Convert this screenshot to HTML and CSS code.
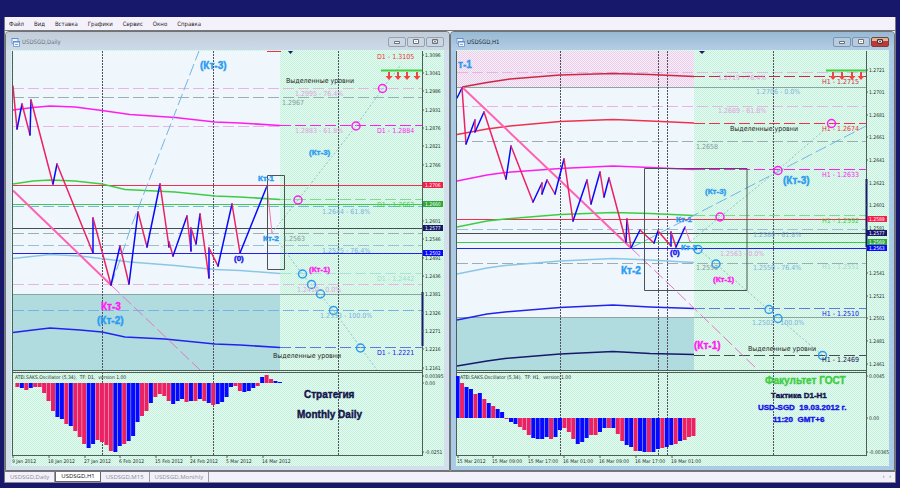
FILE: index.html
```html
<!DOCTYPE html>
<html lang="ru">
<head>
<meta charset="utf-8">
<title>USDSGD</title>
<link rel="stylesheet" href="styles.css">
</head>
<body>
<div class="app">
  <nav class="menubar">
    <button>Файл</button><button>Вид</button><button>Вставка</button><button>Графики</button><button>Сервис</button><button>Окно</button><button>Справка</button>
  </nav>

  <main class="workspace">
    <section class="window">
      <header class="titlebar">
        <svg class="doc-icon" viewBox="0 0 9 9"><path class="doc-back" d="M1 .5h6v5H1z"/><path class="doc-front" d="M2.500 3.500h6v5h-6z"/><path class="doc-bar" d="M2 3h7v1.500H2zM.5 0h7v1h-7z"/><path class="doc-line" d="M4 7l1-1 1 1 1-1"/></svg>
        <h2>USDSGD,Daily</h2>
        <div class="controls">
          <button aria-label="Свернуть"><svg viewBox="0 0 16 8"><path d="M5.500 3.500h5v2h-5z"/></svg></button>
          <button aria-label="Развернуть"><svg viewBox="0 0 16 8"><path d="M5.500 1.500h5v4h-5zM7.500 3.500h1"/></svg></button>
          <button aria-label="Закрыть"><svg viewBox="0 0 16 8"><path d="M5.500 1.500h5v4h-5zM6.500 2.500l3 2M9.500 2.500l-3 2"/></svg></button>
        </div>
      </header>
      <svg class="chart" id="daily" viewBox="11 50 433 416">
        <defs>
          <pattern id="mint" width="2" height="2" patternUnits="userSpaceOnUse"><path class="mint-a" d="M0 0h2v2H0z"/><path class="mint-b" d="M0 0h1v1H0zM1 1h1v1H1z"/></pattern>
          <pattern id="rose" width="2" height="2" patternUnits="userSpaceOnUse"><path class="rose-a" d="M0 0h2v2H0z"/><path class="rose-b" d="M0 0h1v1H0zM1 1h1v1H1z"/></pattern>
          <g id="sell"><path d="M-1 0h2v4h2.500L0 8l-3.500-4H-1z"/></g>
        </defs>
        <rect class="mint" x="11" y="50" width="433" height="416"/>
        <rect class="plot" x="13" y="51" width="267" height="319"/>
        <rect class="teal" x="13" y="294" width="267" height="76"/>
        <g class="dash">
          <path class="c-pink" d="M13 88.500H422M13 126.500H280M13 284.500H422"/>
          <path class="c-gray" d="M13 97.500H422M13 233.500H422"/>
          <path class="c-sky" d="M13 206.500H422M13 310.500H422"/>
          <path class="c-steel" d="M13 245.500H422"/>
          <path class="c-magenta" d="M280 125.500H422"/>
          <path class="c-leaf" d="M280 199.500H422"/>
          <path class="c-pale" d="M280 273.500H422"/>
          <path class="c-indigo" d="M280 347.500H422"/>
        </g>
        <path class="line c-red" d="M13 185.500H422"/>
        <path class="line c-green" d="M13 204.500H422"/>
        <path class="line c-dark" d="M13 228.500H422"/>
        <path class="line c-blue" d="M13 253.500H422"/>
        <path class="line c-slate" d="M13 294.500H422"/>
        <path class="grid" d="M102.500 51V455M213.500 51V455M338.500 51V455"/>
        <g class="average">
          <path class="c-magenta" d="M13 110L33 107.500 50 106 75 107 102 110.500 130 114.500 175 117.500 215 122 240 123 280 125.500"/>
          <path class="c-green" d="M13 184L33 181 50 180 75 181 102 184 125 189.500 175 192 215 196 240 197 280 199.500"/>
          <path class="c-water" d="M13 258.500L50 254.500 80 256 130 262 175 265.500 215 269.500 240 270.500 280 273.500"/>
          <path class="c-blue" d="M13 332.500L33 330 50 328 80 330 102 332 125 337 165 339 215 344 240 345 280 347.500"/>
        </g>
        <path class="ray c-sky" d="M111 285L119 263 131 227 199 51"/>
        <path class="trend" d="M13 190.500L111 285"/>
        <path class="ray c-rose" d="M111 285L200 370"/>
        <path class="dots" d="M272 233L298 200 356 126 383 88 400 66M272 233L302 274 334 311 361 348 377 370"/>
        <g class="zigzag"></g>
        <path class="line c-pinkline" d="M267 186L272 233"/>
        <path class="frame" d="M267.500 175.500h17v94h-17z"/>
        <g class="ring c-magenta"><circle cx="298" cy="200" r="4"/><circle cx="356" cy="126" r="4"/><circle cx="382.500" cy="88.500" r="4"/></g>
        <g class="ring c-azure"><circle cx="302.500" cy="274" r="4"/><circle cx="311.500" cy="284.500" r="4"/><circle cx="320.500" cy="294" r="4"/><circle cx="333.500" cy="310.500" r="4"/><circle cx="360.500" cy="348" r="4"/></g>
        <path class="line c-red" d="M267 51.500H281"/><path class="navy-fill" d="M288 51h5l-2.500 3z"/>
        <path class="signal" d="M381 70.500H422"/>
        <g class="arrows"><use href="#sell" x="389" y="72"/><use href="#sell" x="398" y="72"/><use href="#sell" x="407" y="72"/><use href="#sell" x="417" y="72"/></g>

        <g class="big t-azure"><text x="200" y="69">(Кт-3)</text><text x="97" y="324">(Кт-2)</text></g>
        <text class="big t-magenta" x="101" y="310">Кт-3</text>
        <g class="mid t-azure"><text x="309" y="155">(Кт-3)</text><text x="258" y="181">Кт-1</text><text x="263" y="241">Кт-2</text></g>
        <text class="mid t-magenta" x="309" y="272">(Кт-1)</text>
        <text class="mid t-blue" x="234" y="261">(0)</text>
        <g class="note"><text x="286" y="83">Выделенные уровни</text><text x="273" y="358">Выделенные уровни</text></g>
        <g class="level">
          <text class="t-pink" x="295" y="96">1.2995 - 76.4%</text><text class="t-pink" x="295" y="133">1.2883 - 61.8%</text><text class="t-pink" x="297" y="292">1.2410 - 0.0%</text>
          <text class="t-gray" x="282" y="105">1.2967</text><text class="t-gray" x="283" y="241">1.2563</text>
          <text class="t-sky" x="322" y="214">1.2644 - 61.8%</text><text class="t-sky" x="322" y="253">1.2525 - 76.4%</text><text class="t-sky" x="320" y="318">1.2333 - 100.0%</text>
          <text class="t-red" x="377" y="59">D1 - 1.3105</text><text class="t-magenta" x="377" y="133">D1 - 1.2884</text><text class="t-green" x="377" y="207">D1 - 1.2663</text><text class="t-pale" x="377" y="281">D1 - 1.2442</text><text class="t-blue" x="377" y="355">D1 - 1.2221</text>
        </g>

        <path class="axis-line" d="M12.500 51V455M12 370.500H422M12 372.500H422M422.500 51V455M12 455.500H423"/>
        <path class="marker" d="M422.500 292V346"/>
        <g class="bars"></g>
        <text class="tiny" x="15" y="379">ATEI.SAKS.Oscillator (5,34),&#160; TF: D1,&#160; version 1.00</text>
        <g class="big t-navy"><text x="304" y="398">Стратегия</text><text x="297" y="418">Monthly Daily</text></g>
        <g class="axis"></g>
      </svg>
    </section>

    <section class="window active">
      <header class="titlebar">
        <svg class="doc-icon" viewBox="0 0 9 9"><path class="doc-back" d="M1 .5h6v5H1z"/><path class="doc-front" d="M2.500 3.500h6v5h-6z"/><path class="doc-bar" d="M2 3h7v1.500H2zM.5 0h7v1h-7z"/><path class="doc-line" d="M4 7l1-1 1 1 1-1"/></svg>
        <h2>USDSGD,H1</h2>
        <div class="controls">
          <button aria-label="Свернуть"><svg viewBox="0 0 16 8"><path d="M5.500 3.500h5v2h-5z"/></svg></button>
          <button aria-label="Развернуть"><svg viewBox="0 0 16 8"><path d="M5.500 1.500h5v4h-5zM7.500 3.500h1"/></svg></button>
          <button class="close" aria-label="Закрыть"><svg viewBox="0 0 16 8"><path d="M5.500 1.500h5v4h-5zM6.500 2.500l3 2M9.500 2.500l-3 2"/></svg></button>
        </div>
      </header>
      <svg class="chart" id="hourly" viewBox="456 50 433 416">
        <rect class="mint" x="456" y="50" width="433" height="416"/>
        <rect class="plot" x="457" y="51" width="237" height="319"/>
        <rect class="rose" x="457" y="51" width="237" height="36"/>
        <rect class="teal" x="457" y="317" width="237" height="53"/>
        <g class="dash">
          <path class="c-pink" d="M457 72.500H866M457 106.500H866"/>
          <path class="c-gray" d="M457 141.500H866M457 263.500H866"/>
          <path class="c-steel" d="M457 229.500H866"/>
          <path class="c-crimson" d="M694 76.500H866"/>
          <path class="c-red" d="M694 123.500H866"/>
          <path class="c-magenta" d="M694 169.500H866"/>
          <path class="c-leaf" d="M694 215.500H866"/>
          <path class="c-indigo" d="M694 308.500H866"/>
          <path class="c-dark" d="M694 355.500H866"/>
        </g>
        <path class="line c-slate" d="M457 87.500H866M457 317.500H866"/>
        <path class="line c-red" d="M457 219.500H866"/>
        <path class="line c-dark" d="M457 233.500H866"/>
        <path class="line c-green" d="M457 242.500H866"/>
        <path class="line c-blue" d="M457 248.500H866"/>
        <path class="grid" d="M560.500 51V455M658.500 51V455M667.500 51V455M773.500 51V455"/>
        <g class="average">
          <path class="c-crimson" d="M462 87L487 82.500 510 79 560 75 613 73.500 650 74.500 694 76.500"/>
          <path class="c-red" d="M457 134.500L487 129 510 126 560 121.500 613 119.500 650 121 694 123"/>
          <path class="c-magenta" d="M457 181L487 175 505 172.500 560 168.500 613 166 650 167.500 694 169.500"/>
          <path class="c-green" d="M457 227L487 221 505 219 560 214.500 613 212.500 650 213.500 694 215.500"/>
          <path class="c-water" d="M457 274L487 268 505 265.500 560 261 613 258.500 650 260 694 262.500"/>
          <path class="c-blue" d="M457 320L487 314 505 312 560 307.500 613 305 650 307 694 308.500"/>
          <path class="c-navy" d="M457 366L487 361 505 358.500 560 354 613 351.500 650 353.500 694 354.500"/>
        </g>
        <path class="trend" d="M462 87L631 248"/>
        <path class="ray c-rose" d="M631 248L672 287 758 370"/>
        <path class="ray c-sky" d="M631 248L866 126"/>
        <path class="dots" d="M690 242L720 217 778 170 831 124M690 242L716 264 769 310 822 355"/>
        <g class="zigzag"></g>
        <path class="line c-pinkline" d="M685 227L690 242"/>
        <path class="frame" d="M644.500 168.500h102.500v122h-102.500z"/>
        <g class="ring c-magenta"><circle cx="720" cy="217" r="4"/><circle cx="778" cy="170.500" r="4"/><circle cx="831.500" cy="123.500" r="4"/></g>
        <g class="ring c-azure"><circle cx="698" cy="249.500" r="4"/><circle cx="716" cy="264" r="4"/><circle cx="769" cy="309.500" r="4"/><circle cx="778" cy="318.500" r="4"/><circle cx="822.500" cy="355.500" r="4"/></g>
        <path class="navy-fill" d="M699 51h6l-3 3z"/>
        <path class="signal" d="M826 70.500H866"/>
        <g class="arrows"><use href="#sell" x="833" y="72"/><use href="#sell" x="842" y="72"/><use href="#sell" x="852" y="72"/><use href="#sell" x="861" y="72"/></g>

        <text class="big t-azure" x="458" y="68">т-1</text>
        <g class="big t-azure"><text x="783" y="184">(Кт-3)</text><text x="621" y="274">Кт-2</text></g>
        <text class="big t-magenta" x="694" y="349">(Кт-1)</text>
        <g class="mid t-azure"><text x="705" y="194">(Кт-3)</text><text x="676" y="222">Кт-1</text><text x="681" y="250">Кт-2</text></g>
        <text class="mid t-magenta" x="713" y="282">(Кт-1)</text>
        <text class="mid t-blue" x="670" y="255">(0)</text>
        <g class="note"><text x="730" y="131">Выделенные уровни</text><text x="748" y="351">Выделенные уровни</text></g>
        <g class="level">
          <text class="t-pink" x="718" y="80">1.2719 - 76.4%</text><text class="t-pink" x="718" y="113">1.2689 - 61.8%</text><text class="t-pink" x="720" y="256">1.2563 - 0.0%</text>
          <text class="t-gray" x="696" y="149">1.2658</text><text class="t-gray" x="696" y="270">1.2550</text>
          <text class="t-sky" x="756" y="94">1.2706 - 0.0%</text><text class="t-sky" x="753" y="237">1.2580 - 61.8%</text><text class="t-sky" x="753" y="270">1.2550 - 76.4%</text><text class="t-sky" x="752" y="325">1.2502 - 100.0%</text>
          <text class="t-crimson" x="822" y="84">H1 - 1.2715</text><text class="t-red" x="822" y="131">H1 - 1.2674</text><text class="t-magenta" x="822" y="177">H1 - 1.2633</text><text class="t-green" x="822" y="223">H1 - 1.2592</text><text class="t-pale" x="822" y="269">H1 - 1.2551</text><text class="t-blue" x="822" y="316">H1 - 1.2510</text><text class="t-navy" x="822" y="362">H1 - 1.2469</text>
        </g>

        <path class="axis-line" d="M456.500 51V455M456 370.500H866M456 372.500H866M866.500 51V455M456 455.500H867"/>
        <path class="marker" d="M866.500 179V247"/>
        <g class="bars"></g>
        <text class="tiny" x="460" y="379">ATEI.SAKS.Oscillator (5,34),&#160; TF: H1,&#160; version 1.00</text>
        <text class="big t-green" x="765" y="384">Факультет ГОСТ</text>
        <text class="mid t-navy" x="771" y="398">Тактика D1-H1</text>
        <g class="mid t-blue"><text x="758" y="410">USD-SGD&#160; 19.03.2012 г.</text><text x="773" y="422">11:20&#160; GMT+6</text></g>
        <g class="axis"></g>
      </svg>
    </section>
  </main>

  <footer class="tabs">
    <button>USDSGD,Daily</button><button class="current">USDSGD,H1</button><button>USDSGD,M15</button><button>USDSGD,Monthly</button>
    <span class="pager">‹&#160;&#160;&#160;›</span>
  </footer>
</div>
<script src="script.js"></script>
</body>
</html>
```
FILE: styles.css
```css
* { box-sizing: border-box; }
body { margin: 0; padding: 17px 4px 5px; background: #17186b; font-family: "DejaVu Sans Condensed", "DejaVu Sans", sans-serif; }
button { border: 0; margin: 0; padding: 0; background: none; font: inherit; color: inherit; }
.app { border: solid #77787c; border-width: 0 1px; background: #f2f0fa; }

.menubar { display: flex; gap: 10px; height: 14px; padding: 0 4px; border-bottom: 1px solid #77777a; background: #f4f1fb; font-size: 6px; line-height: 13px; color: #222; }

.workspace { display: grid; grid-template-columns: 1fr 1fr; }
.window { border: 1px solid #6d747b; border-radius: 4px 4px 0 0; padding: 0 5px 4px; background: #d3e0ec; }
.window.active { background: #abcae6; }
.titlebar { display: flex; align-items: center; gap: 2px; height: 18px; margin: 0 -5px; padding: 2px 5px 0; background: linear-gradient(#c2ccd8, #ccdae8); border-radius: 3px 3px 0 0; color: #6a7078; }
.active .titlebar { background: linear-gradient(#98b9d4, #b4cde5); color: #1d2530; }
.titlebar h2 { flex: 1; margin: 0; font-size: 6px; line-height: 10px; font-weight: 400; }
.doc-icon { width: 9px; height: 9px; fill: #fff; }
.doc-back, .doc-front { fill: #eef5fd; stroke: #7b9fd2; }
.doc-bar { fill: #5e8fd4; }
.doc-line { fill: none; stroke: #8ca8cc; }
.controls { display: flex; gap: 1px; }
.controls button { display: flex; width: 18px; height: 10px; border: 1px solid #93a1b0; border-radius: 2px; background: #cbd6e2; }
.controls svg { width: 16px; height: 8px; fill: #fff; stroke: #6a7078; }
.active .controls button { border-color: #7c96b1; background: #b7cce0; }
.active .controls .close { border-color: #7a4038; background: linear-gradient(#d8b898 40%, #c03838 40%); }
.active .controls .close svg { stroke: #5a3030; }

.tabs { display: flex; align-items: stretch; height: 12px; border-top: 1px solid #77777a; border-bottom: 1px solid #88888c; font-family: "Open Sans", sans-serif; font-size: 6px; line-height: 9px; color: #8c8c94; }
.tabs button { padding: 0 5px; border-right: 1px solid #9a9aa2; }
.tabs .current { background: #fff; color: #111; border: solid #66666c; border-width: 0 1px 1px; }
.pager { margin-left: auto; padding-right: 4px; color: #555; }

.chart { display: block; width: 100%; height: auto; }
.chart path, .chart circle { fill: none; }
.chart .mint { fill: url(#mint); }
.chart .rose { fill: url(#rose); }
.chart .mint-a { fill: #ebf9f5; }
.chart .mint-b { fill: #c0f4da; }
.chart .rose-a { fill: #f3f0fa; }
.chart .rose-b { fill: #eeccea; }
.plot { fill: #eff7fc; }
.teal { fill: #b0dce0; }

.line, .frame, .axis-line, .dash { stroke-width: 1; }
.dash, .grid, .axis-line { shape-rendering: crispEdges; }
.dash path { stroke-dasharray: 11 4; }
.grid { stroke: #514f5c; stroke-dasharray: 2 1; }
.average { stroke-width: 1.5; }
.ray { stroke-dasharray: 12 4; }
.trend { stroke: #ff62b4; stroke-width: 2; }
.dots { stroke: #8fc3c4; stroke-dasharray: 2 2; }
.frame { stroke: #4a5450; }
.ring { stroke-width: 1.5; }
.signal { stroke: #3fd03f; stroke-width: 2; }
.axis-line { stroke: #4d6058; }
.marker { stroke: #17186b; stroke-width: 2; }
.zigzag { stroke-width: 1.5; stroke-linecap: round; }
.chart .arrows path, .chart #sell path { fill: #f04444; }
.chart .navy-fill { fill: #17186b; }

.c-pink { stroke: #e8b4e4; }
.c-gray { stroke: #9aaeb4; }
.c-sky { stroke: #74b4e4; }
.c-steel { stroke: #9bbfd6; }
.c-magenta { stroke: #ff1cf0; }
.c-leaf { stroke: #7edc8c; }
.c-pale { stroke: #a8e4d4; }
.c-indigo { stroke: #5f78e4; }
.c-red { stroke: #f0304c; }
.c-green { stroke: #3fcc45; }
.c-dark { stroke: #44504e; }
.c-blue { stroke: #2222f0; }
.c-slate { stroke: #8ba5a5; }
.c-water { stroke: #8cc6e6; }
.c-rose { stroke: #e874c4; }
.c-azure { stroke: #2b9bf0; }
.c-crimson { stroke: #cc2844; }
.c-navy { stroke: #17186b; }
.c-pinkline { stroke: #ff70a8; }
.bull { fill: #0808ff; stroke: #0808ff; }
.bear { fill: #ec2064; stroke: #ec2064; }
.bars rect { stroke: none; }

.big, .mid { font-family: "Liberation Sans", sans-serif; font-weight: 700; stroke-width: .4; }
.big { font-size: 10px; }
.mid { font-size: 8px; }
.note { font-size: 7px; fill: #222; }
.level { font-size: 7px; }
.tiny, .axis text { font-size: 5px; fill: #25302c; }
.axis .on-tag { fill: #fff; }
.axis path { stroke: #4d6058; }
.tag-red { fill: #f0204c; }
.tag-green { fill: #2fa83c; }
.tag-navy { fill: #17186b; }
.tag-blue { fill: #0808ff; }
.t-azure { fill: #2b9bf0; stroke: #2b9bf0; }
.t-magenta { fill: #ff1cf0; stroke: #ff1cf0; }
.t-blue { fill: #1414e8; stroke: #1414e8; }
.t-navy { fill: #14144c; stroke: #14144c; }
.t-green { fill: #3fcc45; stroke: #3fcc45; }
.t-pink { fill: #e0a0dc; }
.t-gray { fill: #84989c; }
.t-sky { fill: #7cb2dc; }
.t-red { fill: #f03040; }
.t-pale { fill: #a2dccb; }
.t-crimson { fill: #cc2c3c; }
.level text { stroke: none; }
```
FILE: script.js
```js
const NS = "http://www.w3.org/2000/svg";

function add(parent, name, attrs, text) {
  const node = document.createElementNS(NS, name);
  for (const key in attrs) node.setAttribute(key, attrs[key]);
  if (text) node.textContent = text;
  parent.appendChild(node);
}

/* Points alternate between falling (bear) and rising (bull) legs. */
function zigzag(chart, points) {
  const group = chart.querySelector(".zigzag");
  for (let i = 1; i < points.length; i++) {
    const [x1, y1] = points[i - 1], [x2, y2] = points[i];
    add(group, "path", { class: y2 > y1 ? "bear" : "bull", d: `M${x1} ${y1}L${x2} ${y2}` });
  }
}

/* Each entry is a colour letter and a signed depth below the zero line. */
function bars(chart, start, zero, data) {
  const group = chart.querySelector(".bars");
  data.split(" ").forEach((item, i) => {
    const depth = Number(item.slice(1));
    add(group, "rect", {
      class: item[0] === "r" ? "bear" : "bull",
      x: start + i * 4.45, width: 4,
      y: depth < 0 ? zero + depth : zero, height: Math.abs(depth)
    });
  });
}

function axis(chart, x, prices, tags, dates) {
  const group = chart.querySelector(".axis");
  for (const [y, label] of prices) {
    add(group, "path", { d: `M${x} ${y}h2` });
    add(group, "text", { x: x + 3, y: y + 2 }, label);
  }
  for (const [y, label, tone] of tags) {
    add(group, "rect", { class: "tag-" + tone, x: x + 1, y: y - 3, width: 20, height: 6 });
    add(group, "text", { class: "on-tag", x: x + 3, y: y + 2 }, label);
  }
  for (const [left, label] of dates) {
    add(group, "path", { d: `M${left + 1} 455v3` });
    add(group, "text", { x: left, y: 463 }, label);
  }
}

const daily = document.getElementById("daily");
zigzag(daily, [[13,86],[17,129],[22,104],[30,135],[31,100],[53,184],[57,164],[93,253],[93,218],[111,285],[120,246],[129,284],[138,212],[147,247],[160,184],[169,247],[169,242],[173,256],[187,216],[191,251],[191,228],[196,244],[200,214],[209,278],[209,248],[218,266],[232,204],[240,253],[267,186]]);
bars(daily, 15.4, 383, "r4 b5 r7 b5 r4 r4 r10 r18 r28 b34 b36 r41 b43 r48 r54 r61 b65 b61 r57 r59 r62 r68 b69 b63 r61 b58 b53 b39 r33 r28 b20 r14 r11 r13 r18 b21 b18 b16 r19 b18 r18 b16 r18 b20 r22 b21 b19 b14 b4 r3 r8 b9 b8 b5 r3 b-6 r-8 r-4 b-2 b-1");
axis(daily, 422,
  [[55,"1.3096"],[73,"1.3041"],[91,"1.2986"],[110,"1.2931"],[128,"1.2876"],[146,"1.2821"],[165,"1.2766"],[221,"1.2601"],[239,"1.2546"],[258,"1.2491"],[276,"1.2436"],[294,"1.2381"],[313,"1.2326"],[331,"1.2271"],[349,"1.2216"],[368,"1.2161"],[376,"0.00395"],[383,"0.00"],[452,"-0.0251"]],
  [[185,"1.2706","red"],[204,"1.2660","green"],[228,"1.2577","navy"],[253,"1.2502","blue"]],
  [[12,"9 Jan 2012"],[48,"18 Jan 2012"],[84,"27 Jan 2012"],[119,"6 Feb 2012"],[155,"15 Feb 2012"],[190,"24 Feb 2012"],[226,"5 Mar 2012"],[262,"14 Mar 2012"]]);

const hourly = document.getElementById("hourly");
zigzag(hourly, [[457,98],[462,88],[466,144],[475,120],[475,132],[484,112],[506,179],[511,146],[533,202],[542,183],[542,194],[547,180],[555,194],[564,159],[573,221],[587,180],[591,204],[600,172],[604,197],[609,178],[626,242],[627,219],[631,248],[640,230],[654,243],[658,231],[671,246],[671,232],[676,247],[685,227]]);
bars(hourly, 455.6, 418, "b-42 r-35 b-31 b-29 r-24 b-25 r-19 b-15 r-12 b-9 b-6 r1 b4 b6 r9 r12 r17 b20 b21 b21 b19 r21 b19 b12 r10 r14 r21 b26 b24 b20 r17 r17 b14 b10 r10 b10 r16 r23 b27 b29 r33 b33 b34 r34 b34 b31 r30 b29 b27 r26 b23 r22 r19 r18");
axis(hourly, 866,
  [[70,"1.2721"],[92,"1.2701"],[115,"1.2681"],[137,"1.2661"],[160,"1.2641"],[183,"1.2621"],[205,"1.2601"],[228,"1.2581"],[273,"1.2541"],[296,"1.2521"],[318,"1.2501"],[341,"1.2481"],[364,"1.2461"],[376,"0.0045"],[418,"0.00"],[452,"-0.00365"]],
  [[219,"1.2589","red"],[233,"1.2577","navy"],[242,"1.2569","green"],[248,"1.2563","blue"]],
  [[457,"15 Mar 2012"],[492,"15 Mar 09:00"],[528,"15 Mar 17:00"],[563,"16 Mar 01:00"],[599,"16 Mar 09:00"],[635,"16 Mar 17:00"],[671,"19 Mar 01:00"]]);
```
